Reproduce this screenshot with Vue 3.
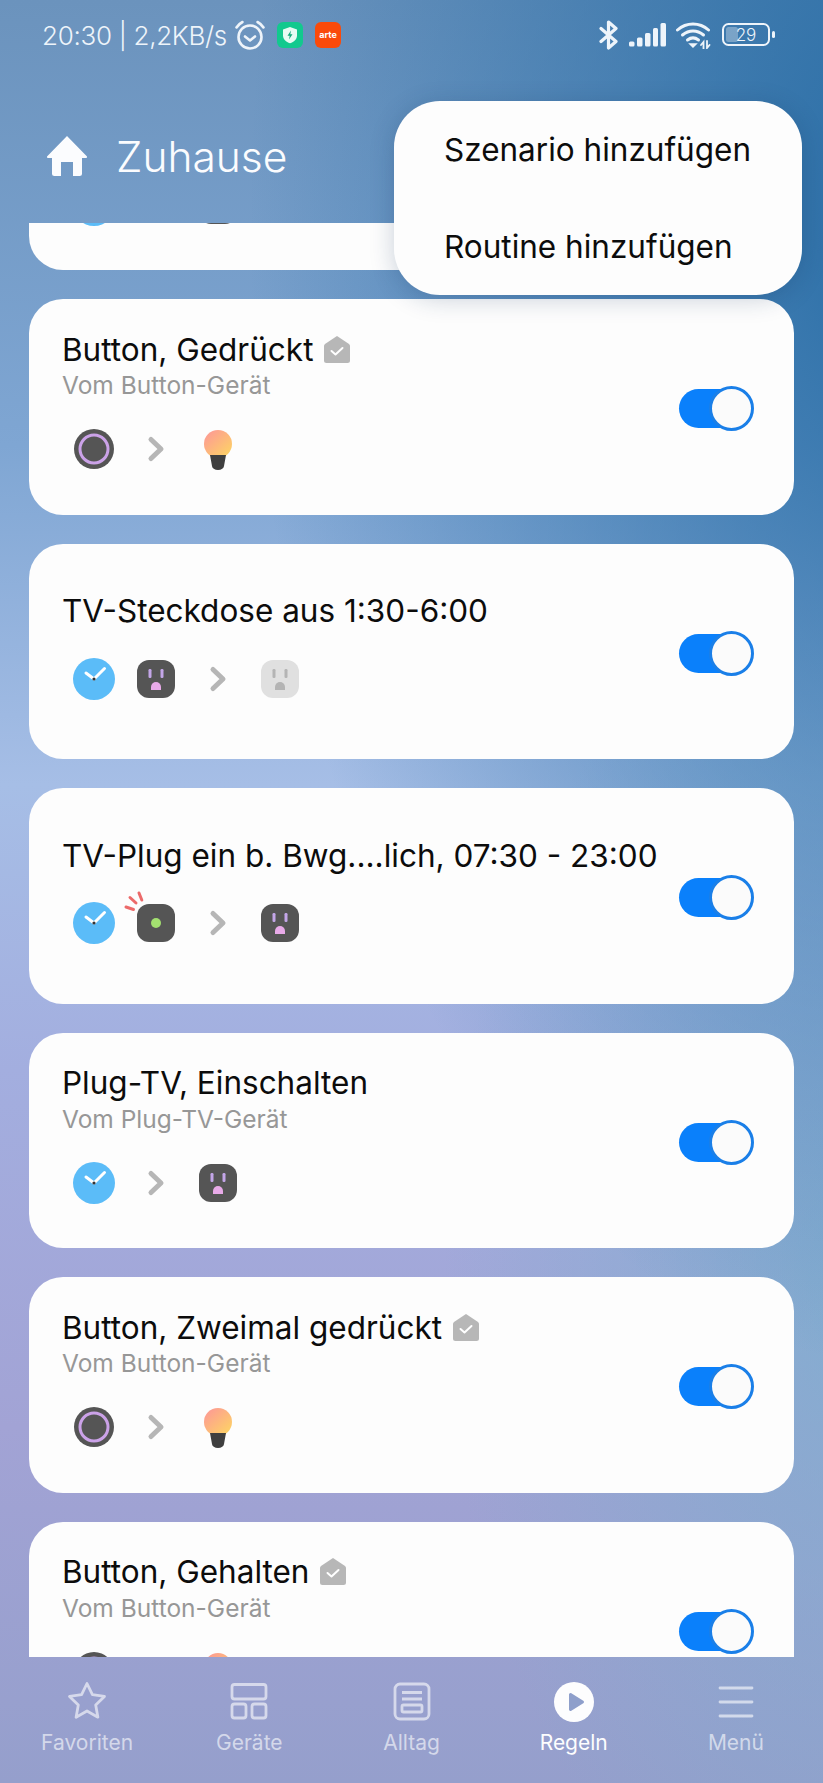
<template>
  <div class="phone">
    <div class="status">
      <span class="status-text">20:30 | 2,2KB/s</span>
      <svg class="alarm" width="32" height="32" viewBox="0 0 32 32" fill="none" stroke="#eef4fa" stroke-width="2.6" stroke-linecap="round" stroke-linejoin="round">
        <circle cx="16" cy="18" r="11.5" />
        <path d="M11 17.5l5 4 5-4" />
        <path d="M2.5 8.5C4 6 6 4.3 8.5 3M29.5 8.5C28 6 26 4.3 23.5 3" />
      </svg>
      <svg class="app-shield" width="26" height="26" viewBox="0 0 26 26">
        <rect width="26" height="26" rx="6" fill="#12c98e" />
        <path d="M13 5l7 2.6v5.6c0 4-2.9 6.600-7 8-4.100-1.400-7-4-7-8V7.600z" fill="#e6fbf3" />
        <path d="M14 8.500l-3.500 5.300h2.200L12 17.500l3.500-5.300h-2.200z" fill="#12a97a" />
      </svg>
      <svg class="app-arte" width="26" height="26" viewBox="0 0 26 26">
        <rect width="26" height="26" rx="6" fill="#fa4a0a" />
        <text x="13" y="15.500" text-anchor="middle" class="arte-label">arte</text>
      </svg>
      <div class="status-right">
        <svg width="20" height="30" viewBox="0 0 20 30" fill="none" stroke="#eef4fa" stroke-width="3.200" stroke-linejoin="round" stroke-linecap="round">
          <path d="M2 8.500l15 13-7.500 6.500V2L17 8.500 2 21.500" />
        </svg>
        <svg class="signal" width="37" height="24" viewBox="0 0 37 24" fill="#eef4fa">
          <rect x="0" y="18.500" width="5.500" height="5" rx="1.500" />
          <rect x="8" y="14.500" width="5.500" height="9" rx="1.500" />
          <rect x="16" y="10" width="5.500" height="13.500" rx="1.500" />
          <rect x="24" y="5" width="5" height="18.500" rx="1.500" />
          <rect x="31.500" y="0" width="5.500" height="23.500" rx="1.500" />
        </svg>
        <svg class="wifi" width="36" height="28" viewBox="0 0 36 28" fill="none" stroke="#eef4fa" stroke-width="3" stroke-linecap="round">
          <path d="M1.500 9C10.500 1 23.500 1 32.500 9" />
          <path d="M6.500 14c6.500-5.500 14.500-5.500 21 0" />
          <path d="M11.500 19c3.500-2.700 7.500-2.700 11 0" />
          <path d="M14 23l3 3 3-3z" fill="#eef4fa" stroke-width="1.500" />
          <path d="M25 24l2.500-3v7M31 20v7l2.500-3" stroke-width="1.800" />
        </svg>
        <svg class="battery" width="54" height="24" viewBox="0 0 54 24">
          <rect x="1" y="1" width="46" height="21" rx="5.500" fill="none" stroke="#eef4fa" stroke-width="2" />
          <rect x="4" y="4" width="12" height="15" rx="2.500" fill="#eef4fa" opacity=".35" />
          <text x="24" y="17.500" text-anchor="middle" class="battery-num">29</text>
          <rect x="50" y="8" width="3" height="7" rx="1.500" fill="#eef4fa" />
        </svg>
      </div>
    </div>

    <div class="header">
      <svg width="40" height="40" viewBox="0 0 40 40" fill="#fbfcfe">
        <path d="M20 0L40 20.500a1 1 0 0 1-1 1.500h-4v15.500a2.500 2.500 0 0 1-2.500 2.500H26V26H14v14H7.500A2.500 2.500 0 0 1 5 37.500V22H1a1 1 0 0 1-1-1.500z" />
      </svg>
      <span class="home-title">Zuhause</span>
    </div>

    <div class="rules">
      <div class="list">
        <div class="card peek">
          <div class="icons">
            <div class="slot"><svg width="62" height="46" viewBox="-31 -23 62 46"><circle r="21" fill="#5bbcf8" /></svg></div>
            <div class="slot"></div>
            <div class="slot"><svg width="62" height="46" viewBox="-31 -23 62 46"><rect x="-19" y="-19" width="38" height="38" rx="12" fill="#555" /></svg></div>
          </div>
        </div>

        <div v-for="rule in rules" :key="rule.title" class="card">
          <div class="info" :class="{ plain: !rule.sub }">
            <div class="title-row">
              <span class="title">{{ rule.title }}</span>
              <svg v-if="rule.badge" class="badge" width="26" height="27" viewBox="0 0 26 27">
                <path d="M13 0l12 8a2.500 2.500 0 0 1 1 2v14.500a2.500 2.500 0 0 1-2.500 2.500h-21A2.500 2.500 0 0 1 0 24.500V10a2.500 2.500 0 0 1 1-2z" fill="#b7b7b7" />
                <path d="M7.500 15l4 3.500 7-6.500" fill="none" stroke="#fff" stroke-width="2" stroke-linecap="round" stroke-linejoin="round" />
              </svg>
            </div>
            <div v-if="rule.sub" class="sub">{{ rule.sub }}</div>
            <div class="icons">
              <div v-for="(icon, i) in rule.icons" :key="i" class="slot">
                <svg width="62" height="46" viewBox="-31 -23 62 46">
                  <g v-if="icon === 'clock'">
                    <circle r="21" fill="#5bbcf8" />
                    <path d="M-8-6L0 0 10.500-10.500" fill="none" stroke="#fff" stroke-width="3" stroke-linecap="round" stroke-linejoin="round" />
                    <circle r="1.600" fill="#333" />
                  </g>
                  <g v-else-if="icon === 'plug'">
                    <rect x="-19" y="-19" width="38" height="38" rx="12" fill="#555" />
                    <rect x="-7.500" y="-10" width="3" height="9" rx="1.200" fill="#c3a6e8" />
                    <rect x="4.500" y="-10" width="3" height="9" rx="1.200" fill="#c3a6e8" />
                    <path d="M-5 11V8a5 5 0 0 1 10 0v3z" fill="#e8aae8" />
                  </g>
                  <g v-else-if="icon === 'plugoff'">
                    <rect x="-19" y="-19" width="38" height="38" rx="12" fill="#e0e0e0" />
                    <rect x="-7.500" y="-10" width="3" height="9" rx="1.200" fill="#b4b4b4" />
                    <rect x="4.500" y="-10" width="3" height="9" rx="1.200" fill="#b4b4b4" />
                    <path d="M-5 11V8a5 5 0 0 1 10 0v3z" fill="#b4b4b4" />
                  </g>
                  <g v-else-if="icon === 'motion'">
                    <rect x="-19" y="-19" width="38" height="38" rx="12" fill="#555" />
                    <circle r="5" fill="#a3e070" />
                    <path d="M-30-16l7.500 2.500M-26-25.500l6 5.500M-17-30l2.800 7" fill="none" stroke="#ec6a6a" stroke-width="3" stroke-linecap="round" />
                  </g>
                  <g v-else-if="icon === 'button'">
                    <circle r="20" fill="#555" />
                    <circle r="14" fill="none" stroke="#cba2e8" stroke-width="3" />
                  </g>
                  <g v-else-if="icon === 'bulb'">
                    <circle cy="-5" r="14" fill="url(#bulbGrad)" />
                    <path d="M-8 6H8L6 17a6 4 0 0 1-12 0z" fill="#3f3f3f" />
                  </g>
                  <path v-else d="M-5-9.500L5 0-5 9.500" fill="none" stroke="#b6b6b6" stroke-width="5" stroke-linecap="round" stroke-linejoin="round" />
                </svg>
              </div>
            </div>
          </div>
          <div class="toggle"><div class="knob"></div></div>
        </div>
      </div>
    </div>

    <div class="tabs">
      <div class="tab">
        <svg width="42" height="42" viewBox="0 0 42 42" fill="none" stroke="currentColor" stroke-width="2.800" stroke-linejoin="round">
          <path d="M21 2.500l5.400 11.200 12.100 1.700-8.800 8.500 2.200 12.300L21 30l-10.900 6.200 2.200-12.300-8.800-8.500 12.100-1.700z" />
        </svg>
        <span>Favoriten</span>
      </div>
      <div class="tab">
        <svg width="42" height="42" viewBox="0 0 42 42" fill="none" stroke="currentColor" stroke-width="2.800" stroke-linejoin="round">
          <rect x="4" y="3.500" width="34" height="14.500" rx="2.500" />
          <rect x="4" y="23" width="14" height="14" rx="2.500" />
          <rect x="24" y="23" width="14" height="14" rx="2.500" />
        </svg>
        <span>Geräte</span>
      </div>
      <div class="tab">
        <svg width="42" height="42" viewBox="0 0 42 42" fill="none" stroke="currentColor" stroke-width="2.800" stroke-linejoin="round">
          <rect x="4" y="3" width="34" height="35" rx="5" />
          <path d="M11 11.500h20M11 18h20" />
          <rect x="11" y="24" width="20" height="7" rx="1.500" />
        </svg>
        <span>Alltag</span>
      </div>
      <div class="tab active">
        <svg width="42" height="42" viewBox="0 0 42 42">
          <circle cx="21" cy="21" r="20" fill="#fdfdfe" />
          <path d="M16 13.500a1.500 1.500 0 0 1 2.300-1.200l12 7.500a1.500 1.500 0 0 1 0 2.500l-12 7.500a1.500 1.500 0 0 1-2.300-1.300z" fill="#8e9fcb" />
        </svg>
        <span>Regeln</span>
      </div>
      <div class="tab">
        <svg width="42" height="42" viewBox="0 0 42 42" fill="none" stroke="currentColor" stroke-width="2.800" stroke-linecap="round">
          <path d="M5 7h32M5 21h32M5 35h32" />
        </svg>
        <span>Menü</span>
      </div>
    </div>

    <div class="menu">
      <div class="menu-item">Szenario hinzufügen</div>
      <div class="menu-item">Routine hinzufügen</div>
    </div>

    <svg class="defs" width="0" height="0">
      <defs>
        <linearGradient id="bulbGrad" x1="0.1" y1="0.1" x2="0.8" y2="0.9">
          <stop offset="0" stop-color="#fd9c93" />
          <stop offset="1" stop-color="#fdcf68" />
        </linearGradient>
      </defs>
    </svg>
  </div>
</template>

<script setup>
const rules = [
  { title: "Button, Gedrückt", sub: "Vom Button-Gerät", badge: true, icons: ["button", "arrow", "bulb"] },
  { title: "TV-Steckdose aus 1:30-6:00", icons: ["clock", "plug", "arrow", "plugoff"] },
  { title: "TV-Plug ein b. Bwg....lich, 07:30 - 23:00", icons: ["clock", "motion", "arrow", "plug"] },
  { title: "Plug-TV, Einschalten", sub: "Vom Plug-TV-Gerät", icons: ["clock", "arrow", "plug"] },
  { title: "Button, Zweimal gedrückt", sub: "Vom Button-Gerät", badge: true, icons: ["button", "arrow", "bulb"] },
  { title: "Button, Gehalten", sub: "Vom Button-Gerät", badge: true, icons: ["button", "arrow", "bulb"] },
];
</script>

<style>
body {
  margin: 0;
}
</style>

<style scoped>
.phone {
  position: relative;
  width: 823px;
  height: 1783px;
  overflow: hidden;
  display: flex;
  flex-direction: column;
  font-family: Inter, "Open Sans", sans-serif;
  background:
    radial-gradient(ellipse 640px 1150px at 108% 12%, rgba(38, 108, 165, 0.95), rgba(38, 108, 165, 0) 100%),
    radial-gradient(ellipse 420px 700px at 105% 72%, rgba(120, 175, 205, 0.75), rgba(120, 175, 205, 0) 100%),
    linear-gradient(180deg, #6b93bd 0, #7fa6d3 25%, #a6bee6 44%, #a3aedf 60%, #a2a3d5 80%, #959fcc 100%);
}

.status {
  height: 70px;
  display: flex;
  align-items: center;
  padding: 0 47px 0 42px;
  color: #eef4fa;
}

.status-text {
  font-size: 26px;
  font-weight: 300;
  letter-spacing: -0.3px;
  white-space: nowrap;
}

.alarm {
  margin-left: 7px;
}

.app-shield {
  margin-left: 11px;
}

.app-arte {
  margin-left: 12px;
}

.arte-label {
  font-size: 9px;
  font-weight: 700;
  fill: #fff;
}

.status-right {
  margin-left: auto;
  display: flex;
  align-items: center;
  gap: 10px;
}

.battery-num {
  font-size: 17px;
  font-weight: 300;
  fill: #eef4fa;
}

.header {
  height: 153px;
  display: flex;
  align-items: center;
  gap: 29px;
  padding: 19px 0 0 47px;
  box-sizing: border-box;
  color: #fbfcfe;
}

.home-title {
  font-size: 42.5px;
  font-weight: 300;
}

.rules {
  height: 1434px;
  overflow: hidden;
  padding: 0 29px;
}

.list {
  display: flex;
  flex-direction: column;
  gap: 29px;
}

.card {
  flex: none;
  height: 215.500px;
  border-radius: 34px;
  background: #fdfdfd;
  display: flex;
  align-items: center;
  justify-content: space-between;
  padding: 0 42px 0 34px;
  box-sizing: border-box;
}

.peek {
  height: 47px;
  border-radius: 0 0 34px 34px;
  align-items: flex-start;
  overflow: hidden;
}

.peek .icons {
  margin-top: -41px;
}

.info {
  align-self: flex-start;
  padding-top: 30px;
}

.info.plain {
  padding-top: 47px;
}

.title-row {
  display: flex;
  align-items: center;
  gap: 11px;
  height: 40px;
}

.title {
  font-size: 31.500px;
  color: #0c0c0c;
  white-space: nowrap;
  margin-left: -1px;
}

.sub {
  font-size: 24.500px;
  line-height: 32px;
  color: #979797;
  margin-left: -1px;
}

.icons {
  display: flex;
  margin-top: 25px;
}

.info.plain .icons {
  margin-top: 25px;
}

.slot {
  width: 62px;
  height: 46px;
}

.slot svg {
  display: block;
  overflow: visible;
}

.toggle {
  position: relative;
  width: 73px;
  height: 39px;
  border-radius: 20px;
  background: #0a80fb;
  margin-top: 4px;
}

.knob {
  position: absolute;
  right: -2px;
  top: -3px;
  width: 45px;
  height: 45px;
  box-sizing: border-box;
  border: 3px solid #1a7fe8;
  border-radius: 50%;
  background: #fbfbfb;
}

.tabs {
  flex: 1;
  display: flex;
  padding: 0 6px;
}

.tab {
  flex: 1;
  display: flex;
  flex-direction: column;
  align-items: center;
  padding-top: 24px;
  color: rgba(255, 255, 255, 0.6);
}

.tab.active {
  color: #fdfdfe;
}

.tab span {
  margin-top: 5px;
  font-size: 21px;
  line-height: 30px;
}

.menu {
  position: absolute;
  left: 394px;
  top: 101px;
  width: 408px;
  height: 194px;
  border-radius: 46px;
  background: #fdfdfd;
  box-shadow: 0 4px 24px rgba(20, 50, 90, 0.22);
  display: flex;
  flex-direction: column;
  justify-content: center;
}

.menu-item {
  height: 97px;
  line-height: 97px;
  padding-left: 50px;
  font-size: 31.500px;
  color: #0c0c0c;
}

.defs {
  position: absolute;
}
</style>
